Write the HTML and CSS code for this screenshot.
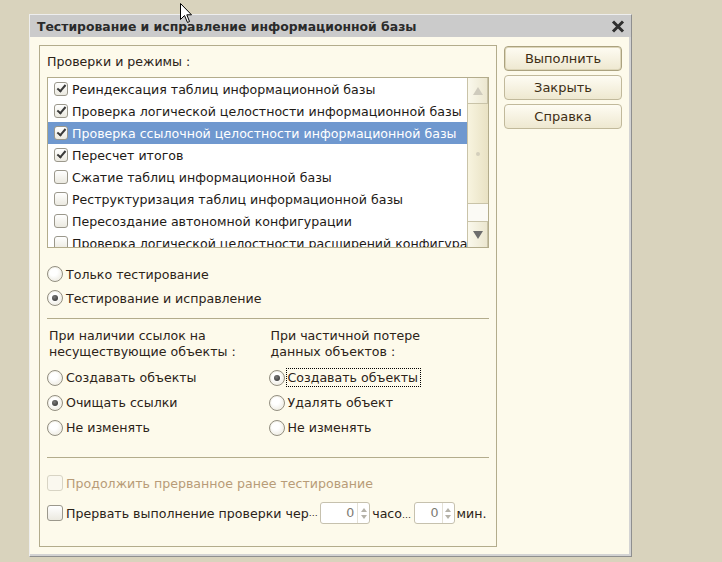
FILE: index.html
```html
<!DOCTYPE html>
<html lang="ru">
<head>
    <meta charset="UTF-8">
    <title>Тестирование и исправление информационной базы</title>
    <link rel="stylesheet" href="styles.css">
</head>
<body>
    <div class="window">
        <div class="titlebar">
            <span class="title">Тестирование и исправление информационной базы</span>
            <svg class="close" width="14" height="13" viewBox="0 0 14 13">
                <path d="M2 1.5 L12 11.5 M12 1.5 L2 11.5" stroke="#2f2f2f" stroke-width="3"/>
            </svg>
        </div>
        <div class="content">
            <div class="group">
                <div class="caption">Проверки и режимы :</div>
                <div class="list">
                    <div class="rows">
                        <div class="row"><span class="check on"></span>Реиндексация таблиц информационной базы</div>
                        <div class="row"><span class="check on"></span>Проверка логической целостности информационной базы</div>
                        <div class="row selected"><span class="check on"></span>Проверка ссылочной целостности информационной базы</div>
                        <div class="row"><span class="check on"></span>Пересчет итогов</div>
                        <div class="row"><span class="check"></span>Сжатие таблиц информационной базы</div>
                        <div class="row"><span class="check"></span>Реструктуризация таблиц информационной базы</div>
                        <div class="row"><span class="check"></span>Пересоздание автономной конфигурации</div>
                        <div class="row"><span class="check"></span>Проверка логической целостности расширений конфигурации</div>
                    </div>
                    <div class="scrollbar">
                        <div class="sb-btn"><span class="arrow-up"></span></div>
                        <div class="sb-thumb"><span class="grip"></span></div>
                        <div class="sb-track"></div>
                        <div class="sb-btn"><span class="arrow-down"></span></div>
                    </div>
                </div>

                <div class="modes">
                    <div class="opt"><span class="radio"></span>Только тестирование</div>
                    <div class="opt"><span class="radio on"></span>Тестирование и исправление</div>
                </div>

                <div class="sep"></div>

                <div class="cols">
                    <div class="col">
                        <div class="col-label">При наличии ссылок на<br>несуществующие объекты :</div>
                        <div class="opt tall"><span class="radio"></span>Создавать объекты</div>
                        <div class="opt tall"><span class="radio on"></span>Очищать ссылки</div>
                        <div class="opt tall"><span class="radio"></span>Не изменять</div>
                    </div>
                    <div class="col">
                        <div class="col-label">При частичной потере<br>данных объектов :</div>
                        <div class="opt tall"><span class="radio on"></span><span class="focus">Создавать объекты</span></div>
                        <div class="opt tall"><span class="radio"></span>Удалять объект</div>
                        <div class="opt tall"><span class="radio"></span>Не изменять</div>
                    </div>
                </div>

                <div class="sep sep-bottom"></div>

                <div class="opt disabled first-check"><span class="check big"></span>Продолжить прерванное ранее тестирование</div>
                <div class="opt interrupt">
                    <span class="check big"></span>Прервать выполнение проверки чер<span class="dots">…</span>
                    <span class="spin"><span class="spin-value">0</span><span class="spin-arrows"><span class="arrow-up"></span><span class="arrow-down"></span></span></span>
                    <span class="unit">часо<span class="dots">…</span></span>
                    <span class="spin small"><span class="spin-value">0</span><span class="spin-arrows"><span class="arrow-up"></span><span class="arrow-down"></span></span></span>
                    <span class="unit">мин.</span>
                </div>
            </div>

            <div class="buttons">
                <div class="button default">Выполнить</div>
                <div class="button">Закрыть</div>
                <div class="button">Справка</div>
            </div>
        </div>
    </div>

    <svg class="cursor" width="13" height="21" viewBox="0 0 13 21">
        <path d="M0.5 0.5 L0.5 16.5 L4.5 12.5 L7.5 19.5 L9.5 18.5 L6.8 11.8 L11.5 11.8 Z" fill="#fff" stroke="#000" stroke-width="1"/>
    </svg>
</body>
</html>
```

FILE: styles.css
```css
body {
    margin: 0;
    background-color: #d9d3bd;
    font-family: "DejaVu Sans", Verdana, sans-serif;
    font-size: 12.6px;
    color: #2c2318;
}
.window {
    margin: 14px 0 0 29px;
    width: 601px;
    height: 541px;
    border: 1px solid;
    border-color: #eeeeee #8f8f8f #8f8f8f #eeeeee;
    display: flex;
    flex-direction: column;
}
.titlebar {
    height: 22px;
    background-color: #cbcbcb;
    display: flex;
    align-items: center;
    justify-content: space-between;
    padding: 0 6px 0 7px;
}
.title {
    font-weight: bold;
    font-size: 12.4px;
    color: #2a2a2a;
}
.close {
    display: block;
}
.content {
    flex: 1;
    display: flex;
    align-items: flex-start;
    background-color: #fdfaeb;
    padding: 8px 0 0 9px;
    border-right: 2px solid #d3d3d3;
    border-bottom: 2px solid #d3d3d3;
}
.group {
    width: 442px;
    height: 492px;
    border: 1px solid #b3ac8c;
    padding: 8px 7px 0 7px;
}
.caption {
    line-height: 16px;
    margin-bottom: 7px;
}
.list {
    height: 169px;
    border: 1px solid #b3ac8c;
    background-color: #fff;
    display: flex;
}
.rows {
    flex: 1;
    overflow: hidden;
}
.row {
    height: 22px;
    display: flex;
    align-items: center;
    white-space: nowrap;
    color: #1e1a16;
    padding-left: 6px;
}
.row.selected {
    background-color: #6f98cf;
    color: #fff;
}
.check {
    width: 12px;
    height: 12px;
    flex: none;
    border: 1px solid #9b988c;
    border-radius: 3px;
    background: linear-gradient(#ffffff, #ebe9e0);
    margin-right: 4px;
    display: inline-flex;
    align-items: center;
    justify-content: center;
}
.check.on::after {
    content: "";
    width: 3px;
    height: 7px;
    border-right: 2px solid #3a3a3a;
    border-bottom: 2px solid #3a3a3a;
    transform: rotate(40deg);
    margin-top: -3px;
}
.check.big {
    width: 14px;
    height: 14px;
    margin-right: 3px;
}
.scrollbar {
    width: 20px;
    border-left: 1px solid #c9c3a8;
    display: flex;
    flex-direction: column;
    background-color: #faf8ee;
}
.sb-btn {
    height: 25px;
    border: 1px solid #c9c3a8;
    border-left: 0;
    background: linear-gradient(to right, #faf8ec, #ece7d0);
    display: flex;
    align-items: center;
    justify-content: center;
}
.sb-btn:first-child {
    border-top: 0;
}
.sb-btn:last-child {
    border-bottom: 0;
}
.sb-thumb {
    height: 99px;
    border-bottom: 1px solid #c9c3a8;
    background: linear-gradient(to right, #f8f4df, #e9e2c4);
    display: flex;
    align-items: center;
    justify-content: center;
}
.grip {
    width: 4px;
    height: 4px;
    border-radius: 2px;
    background-color: #d4cfbc;
}
.sb-track {
    height: 17px;
    background-color: #fbfaf5;
}
.arrow-up {
    border-left: 5px solid transparent;
    border-right: 5px solid transparent;
    border-bottom: 8px solid #cfcbbd;
}
.arrow-down {
    border-left: 5px solid transparent;
    border-right: 5px solid transparent;
    border-top: 8px solid #6d6d6d;
}
.modes {
    margin-top: 14px;
}
.opt {
    height: 24px;
    display: flex;
    align-items: center;
    white-space: nowrap;
}
.opt.tall {
    height: 25px;
}
.radio {
    width: 14px;
    height: 14px;
    flex: none;
    border: 1px solid #928e80;
    border-radius: 50%;
    background: radial-gradient(circle at 40% 35%, #ffffff 30%, #e6e3d7 100%);
    box-shadow: inset 0 0 0 1px #f4f2ea;
    margin-right: 3px;
    display: inline-flex;
    align-items: center;
    justify-content: center;
}
.radio.on::after {
    content: "";
    width: 6px;
    height: 6px;
    border-radius: 50%;
    background: radial-gradient(circle at 40% 35%, #7a7a7a, #2a2a2a);
}
.sep {
    height: 1px;
    background-color: #b3ac8c;
    margin-top: 8px;
}
.cols {
    display: flex;
    margin-top: 9px;
}
.col {
    width: 223px;
}
.col + .col {
    padding-left: 1px;
}
.col-label {
    line-height: 16px;
    margin-bottom: 5px;
    padding-left: 2px;
}
.focus {
    outline: 1px dotted #000;
    outline-offset: 1px;
    padding-right: 1px;
}
.sep-bottom {
    margin-top: 17px;
}
.first-check {
    margin-top: 13px;
}
.disabled {
    color: #b89c78;
}
.disabled .check {
    border-color: #d8d4c4;
    background: #faf8ef;
}
.interrupt {
    margin-top: 6px;
}
.dots {
    font-size: 9px;
    letter-spacing: -0.5px;
}
.spin {
    width: 48px;
    height: 20px;
    border: 1px solid #c6c1ae;
    border-radius: 3px;
    background-color: #fff;
    display: inline-flex;
    margin: 0 2px 0 3px;
}
.spin.small {
    width: 39px;
}
.spin-value {
    flex: 1;
    text-align: right;
    padding-right: 3px;
    line-height: 20px;
    color: #7d7a72;
}
.spin-arrows {
    width: 11px;
    border-left: 1px solid #e4e1d6;
    display: flex;
    flex-direction: column;
    align-items: center;
    justify-content: center;
    gap: 3px;
}
.spin-arrows .arrow-up,
.spin-arrows .arrow-down {
    border-left-width: 3px;
    border-right-width: 3px;
    border-bottom-width: 4px;
    border-top-width: 4px;
}
.spin-arrows .arrow-up {
    border-bottom-color: #b5b2a8;
    border-top: 0;
}
.spin-arrows .arrow-down {
    border-top-color: #b5b2a8;
    border-bottom: 0;
}
.unit {
    color: #2c2318;
}
.buttons {
    margin-left: 7px;
    margin-top: 1px;
    display: flex;
    flex-direction: column;
    gap: 4px;
}
.button {
    width: 116px;
    height: 23px;
    border: 1px solid #c1b99b;
    border-radius: 4px;
    background: linear-gradient(#fefcf3, #eee8d0);
    color: #3e2e14;
    text-align: center;
    line-height: 23px;
    font-size: 13px;
}
.button.default {
    border-color: #aba27f;
    box-shadow: inset 0 0 0 1px #ddd6b9;
}
.cursor {
    position: absolute;
    left: 180px;
    top: 3px;
}
```
